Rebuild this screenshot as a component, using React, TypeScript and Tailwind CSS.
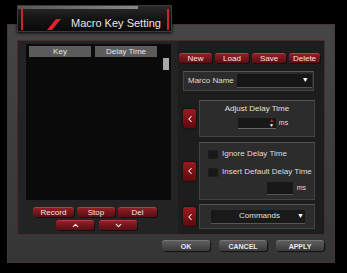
import { ChevronLeft, ChevronUp, ChevronDown } from "lucide-react";

function RedBtn({ children, w }: { children: React.ReactNode; w: string }) {
  return (
    <div
      className={`${w} flex h-[10px] items-center justify-center rounded-[3px] border-t border-[#b04048] bg-gradient-to-b from-[#8e2027] to-[#5a0e12] text-[8px] leading-none text-[#f2e6e6] shadow-[1px_1px_0_#111]`}
    >
      {children}
    </div>
  );
}

function SideArrow() {
  return (
    <div className="flex h-[19px] w-[13px] items-center justify-center rounded-[3px] bg-gradient-to-b from-[#a01820] to-[#5e0a0e] shadow-[0_0_2px_#000]">
      <ChevronLeft size={10} strokeWidth={2.5} className="text-white" />
    </div>
  );
}

function GrayBtn({ children }: { children: React.ReactNode }) {
  return (
    <div className="flex h-[11px] w-[48px] items-center justify-center rounded-[3px] border-t border-[#777] bg-gradient-to-b from-[#5e5e5e] to-[#3a3a3a] text-[7px] font-bold leading-none text-[#e8e8e8] shadow-[1px_1px_1px_#111]">
      {children}
    </div>
  );
}

export default function App() {
  return (
    <div className="relative h-[273px] w-[347px] overflow-hidden bg-black font-['Liberation_Sans',Arial,sans-serif]">
      {/* window body */}
      <div className="ml-[7px] mt-[24px] flex h-[239px] w-[328px] flex-col border border-[#4a3434] bg-gradient-to-b from-[#454545] to-[#353535]">
        {/* inner panel */}
        <div className="ml-[9px] mt-[15px] flex h-[195px] w-[308px] border border-[#4a2a2a] bg-[#232323]">
          {/* left: list */}
          <div className="flex w-[160px] flex-col pl-[8px] pt-[3px]">
            <div className="flex h-[156px] w-[145px] bg-[#0a0a0a]">
              <div className="flex flex-1 flex-col pl-[3px] pt-[2px]">
                <div className="flex gap-[4px]">
                  <div className="flex h-[11px] w-[62px] items-center justify-center bg-[#5b5b5b] text-[8px] leading-none text-[#e4e4e4]">
                    Key
                  </div>
                  <div className="flex h-[11px] w-[62px] items-center justify-center bg-[#5b5b5b] text-[8px] leading-none text-[#e4e4e4]">
                    Delay Time
                  </div>
                </div>
              </div>
              <div className="w-[8px] pt-[14px]">
                <div className="h-[12px] w-[6px] bg-[#a8a8a8]"></div>
              </div>
            </div>
            <div className="ml-[7px] mt-[7px] flex gap-[3px]">
              <RedBtn w="w-[41px]">Record</RedBtn>
              <RedBtn w="w-[38px]">Stop</RedBtn>
              <RedBtn w="w-[39px]">Del</RedBtn>
            </div>
            <div className="ml-[30px] mt-[3px] flex gap-[5px]">
              <RedBtn w="w-[38px]">
                <ChevronUp size={9} strokeWidth={3} />
              </RedBtn>
              <RedBtn w="w-[38px]">
                <ChevronDown size={9} strokeWidth={3} />
              </RedBtn>
            </div>
          </div>

          {/* right: controls */}
          <div className="flex w-[146px] flex-col bg-[#1d1d1d] pl-[1px] pt-[12px]">
            <div className="flex gap-[3px]">
              <RedBtn w="w-[33px]">New</RedBtn>
              <RedBtn w="w-[34px]">Load</RedBtn>
              <RedBtn w="w-[34px]">Save</RedBtn>
              <RedBtn w="w-[31px]">Delete</RedBtn>
            </div>
            <div className="ml-[4px] mt-[8px] flex h-[20px] w-[131px] items-center border border-[#444] border-t-[#555] bg-[#2c2c2c] pl-[4px] text-[8px] text-[#dedede]">
              <span>Marco Name</span>
              <div className="ml-[3px] flex h-[14px] w-[75px] items-center justify-end border-b border-[#555] bg-[#161616] pr-[3px]">
                <span className="text-[7px] text-white">▼</span>
              </div>
            </div>

            <div className="mt-[9px] flex items-center gap-[3px] pl-[4px]">
              <SideArrow />
              <div className="flex h-[37px] w-[116px] flex-col items-center border border-[#444] border-t-[#555] bg-[#2c2c2c] pt-[2px]">
                <span className="text-[8px] text-[#e0e0e0]">Adjust Delay Time</span>
                <div className="mt-[3px] flex items-center pl-[12px]">
                  <div className="flex h-[11px] w-[38px] items-center justify-end border-b border-[#666] bg-[#181818] pr-[2px]">
                    <div className="flex flex-col items-center leading-none">
                      <span className="text-[5px] leading-[5px] text-[#e01818]">▲</span>
                      <span className="text-[5px] leading-[5px] text-white">▼</span>
                    </div>
                  </div>
                  <span className="ml-[3px] text-[7px] text-[#dcdcdc]">ms</span>
                </div>
              </div>
            </div>

            <div className="mt-[5px] flex items-center gap-[3px] pl-[4px]">
              <SideArrow />
              <div className="flex h-[58px] w-[116px] flex-col border border-[#444] border-t-[#555] bg-[#2c2c2c] pl-[8px] pt-[5px] text-[8px] text-[#dcdcdc]">
                <div className="flex items-center gap-[4px]">
                  <div className="h-[9px] w-[10px] bg-[#181818] shadow-[inset_0_0_1px_#555]"></div>
                  <span>Ignore Delay Time</span>
                </div>
                <div className="mt-[6px] flex items-center gap-[4px]">
                  <div className="h-[9px] w-[10px] bg-[#181818] shadow-[inset_0_0_1px_#555]"></div>
                  <span>Insert Default Delay Time</span>
                </div>
                <div className="mt-[4px] flex items-center justify-end pr-[8px]">
                  <div className="h-[13px] w-[26px] border-b border-[#555] bg-[#181818]"></div>
                  <span className="ml-[4px] text-[7px]">ms</span>
                </div>
              </div>
            </div>

            <div className="mt-[4px] flex items-center gap-[3px] pl-[4px]">
              <SideArrow />
              <div className="flex h-[25px] w-[116px] items-center border border-[#444] border-t-[#555] bg-[#2c2c2c] pl-[11px]">
                <div className="flex h-[14px] w-[94px] items-center border-b border-[#555] bg-[#191919] pl-[28px] text-[8px] text-[#e0e0e0]">
                  <span>Commands</span>
                  <span className="ml-[17px] text-[7px] text-white">▼</span>
                </div>
              </div>
            </div>
          </div>
        </div>

        {/* footer buttons */}
        <div className="mr-[10px] mt-[5px] flex justify-end gap-[9px]">
          <GrayBtn>OK</GrayBtn>
          <GrayBtn>CANCEL</GrayBtn>
          <GrayBtn>APPLY</GrayBtn>
        </div>
      </div>

      {/* title tab overlapping the window */}
      <div className="absolute left-[17px] top-[5px] flex h-[27px] w-[155px] items-center border border-[#3a3a3a] bg-gradient-to-b from-[#2a2a2a] via-[#141414] to-[#0a0a0a] shadow-[0_1px_3px_#000]">
        <div className="absolute left-[3px] top-[3px] h-[21px] w-[2px] bg-[#d0202a]"></div>
        <div className="absolute right-[2px] top-[3px] h-[21px] w-[2px] bg-[#d0202a]"></div>
        <div className="absolute left-0 top-0 h-[3px] w-[120px] bg-gradient-to-r from-[#555] to-[#888]"></div>
        <svg className="absolute left-[29px] top-[13px]" width="16" height="12" viewBox="0 0 16 12">
          <polygon points="9,0 14,0 5,11 0,11" fill="#e0202c" />
        </svg>
        <span className="absolute left-[53px] top-[12px] text-[11px] leading-none text-[#e6e6e6]">
          Macro Key Setting
        </span>
      </div>
    </div>
  );
}
